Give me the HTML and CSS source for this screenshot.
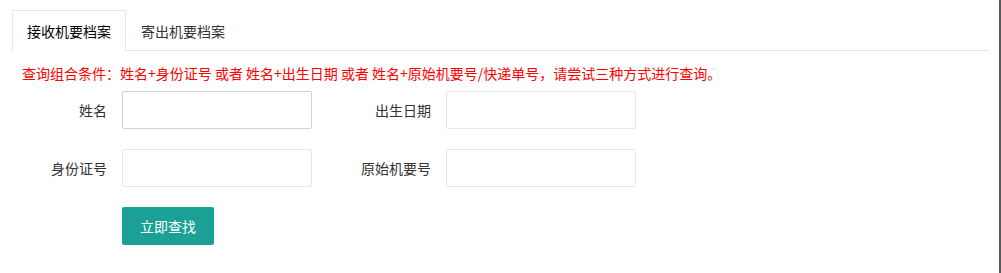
FILE: index.html
```html
<!DOCTYPE html>
<html lang="zh-CN">
<head>
<meta charset="utf-8">
<title>机要档案查询</title>
<link rel="stylesheet" href="styles.css">
</head>
<body>
<div class="page">
  <ul class="tab-title">
    <li class="tab active">接收机要档案</li>
    <li class="tab">寄出机要档案</li>
  </ul>
  <p class="tip">查询组合条件：姓名+身份证号 或者 姓名+出生日期 或者 姓名+原始机要号/快递单号，请尝试三种方式进行查询。</p>
  <form class="form">
    <div class="form-row">
      <div class="field">
        <label class="label">姓名</label>
        <input class="input input-hover" type="text">
      </div>
      <div class="field">
        <label class="label">出生日期</label>
        <input class="input" type="text">
      </div>
    </div>
    <div class="form-row">
      <div class="field">
        <label class="label">身份证号</label>
        <input class="input" type="text">
      </div>
      <div class="field">
        <label class="label">原始机要号</label>
        <input class="input" type="text">
      </div>
    </div>
    <div class="form-actions">
      <button class="btn" type="button">立即查找</button>
    </div>
  </form>
</div>
</body>
</html>
```

FILE: styles.css
```css
* { box-sizing: border-box; }
html, body { margin: 0; padding: 0; background: #fff; }
body {
  font-family: "Noto Sans CJK SC", "Noto Sans", sans-serif;
  font-size: 14px;
  color: #333;
}
.page {
  width: 1001px;
  height: 273px;
  padding: 10px 10px 0 12px;
  border-right: 2px solid #5a5a5a;
}
.tab-title {
  list-style: none;
  margin: 0;
  padding: 0;
  height: 41px;
  border-bottom: 1px solid #e6e6e6;
  display: flex;
}
.tab {
  height: 41px;
  line-height: 41px;
  padding: 0 14px;
  font-size: 14px;
  color: #333;
  border: 1px solid transparent;
  border-bottom: none;
}
.tab.active {
  color: #000;
  border-color: #e6e6e6;
  border-radius: 2px 2px 0 0;
  background: #fff;
  margin-bottom: -1px;
  position: relative;
}
.tip {
  margin: 12px 0 0 10px;
  line-height: 20px;
  color: #ff0000;
  font-size: 14px;
}
.form { margin-top: 8px; }
.form-row {
  display: flex;
  gap: 24px;
  margin-bottom: 20px;
}
.field { display: flex; align-items: center; }
.label {
  width: 110px;
  padding-right: 15px;
  text-align: right;
  color: #333;
  font-size: 14px;
  line-height: 20px;
}
.input {
  width: 190px;
  height: 38px;
  border: 1px solid #e6e6e6;
  border-radius: 2px;
  background: #fff;
  padding: 0 10px;
  font: inherit;
  outline: none;
}
.input-hover { border-color: #d2d2d2; }
.form-actions { padding-left: 110px; }
.btn {
  height: 38px;
  line-height: 38px;
  padding: 0 18px;
  border: none;
  border-radius: 2px;
  background: #1aa094;
  color: #fff;
  font: inherit;
  font-size: 14px;
  cursor: pointer;
}
```
